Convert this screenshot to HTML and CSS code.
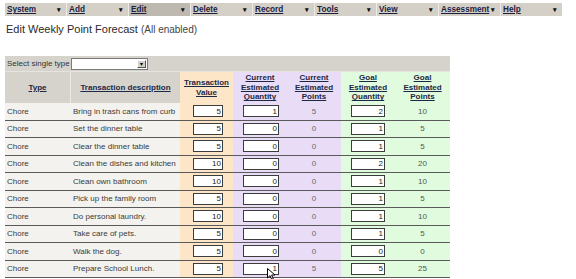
FILE: index.html
```html
<!DOCTYPE html>
<html lang="en">
<head>
    <meta charset="UTF-8">
    <title>Edit Weekly Point Forecast</title>
    <link rel="stylesheet" href="styles.css">
</head>
<body>

    <div class="menubar">
        <a class="menu-item" href="#"><span>System</span><i>&#9662;</i></a>
        <a class="menu-item" href="#"><span>Add</span><i>&#9662;</i></a>
        <a class="menu-item active" href="#"><span>Edit</span><i>&#9662;</i></a>
        <a class="menu-item" href="#"><span>Delete</span><i>&#9662;</i></a>
        <a class="menu-item" href="#"><span>Record</span><i>&#9662;</i></a>
        <a class="menu-item" href="#"><span>Tools</span><i>&#9662;</i></a>
        <a class="menu-item" href="#"><span>View</span><i>&#9662;</i></a>
        <a class="menu-item" href="#"><span>Assessment</span><i>&#9662;</i></a>
        <a class="menu-item" href="#"><span>Help</span><i>&#9662;</i></a>
    </div>

    <h1 class="title">Edit Weekly Point Forecast <small>(All enabled)</small></h1>

    <table class="forecast">
        <colgroup>
            <col style="width:66px">
            <col style="width:109px">
            <col style="width:53px">
            <col style="width:54px">
            <col style="width:54px">
            <col style="width:54px">
            <col style="width:55px">
        </colgroup>
        <tr class="filter-row">
            <td colspan="7">
                Select single type
                <span class="select-box"><select></select><span class="select-btn">&#9662;</span></span>
            </td>
        </tr>
        <tr class="head-row">
            <th class="sep"><a href="#">Type</a></th>
            <th><a href="#">Transaction description</a></th>
            <th class="c-val"><a href="#">Transaction Value</a></th>
            <th class="c-cur"><a href="#">Current Estimated Quantity</a></th>
            <th class="c-cur"><a href="#">Current Estimated Points</a></th>
            <th class="c-goal"><a href="#">Goal Estimated Quantity</a></th>
            <th class="c-goal"><a href="#">Goal Estimated Points</a></th>
        </tr>
        <tbody id="rows"></tbody>
    </table>

    <svg class="cursor" width="9" height="12" viewBox="0 0 9 12">
        <path d="M0.5 0.5 L0.5 10 L3 7.6 L4.8 11.5 L6.3 10.8 L4.6 7 L8 7 Z" fill="#fff" stroke="#000" stroke-width="1"/>
    </svg>

    <script>
        // Chores for this week: [description, value, current qty, goal qty]
        const chores = [
            ['Bring in trash cans from curb', 5, 1, 2],
            ['Set the dinner table', 5, 0, 1],
            ['Clear the dinner table', 5, 0, 1],
            ['Clean the dishes and kitchen', 10, 0, 2],
            ['Clean own bathroom', 10, 0, 1],
            ['Pick up the family room', 5, 0, 1],
            ['Do personal laundry.', 10, 0, 1],
            ['Take care of pets.', 5, 0, 1],
            ['Walk the dog.', 5, 0, 0],
            ['Prepare School Lunch.', 5, 1, 5]
        ];

        const tbody = document.getElementById('rows');

        chores.forEach(c => {
            const tr = document.createElement('tr');
            tr.className = 'data-row';
            tr.innerHTML =
                '<td class="txt">Chore</td>' +
                '<td class="txt">' + c[0] + '</td>' +
                '<td class="c-val"><input class="num w-val" value="' + c[1] + '"></td>' +
                '<td class="c-cur"><input class="num w-cur" value="' + c[2] + '"></td>' +
                '<td class="c-cur pts">' + (c[1] * c[2]) + '</td>' +
                '<td class="c-goal"><input class="num w-goal" value="' + c[3] + '"></td>' +
                '<td class="c-goal pts goal">' + (c[1] * c[3]) + '</td>';
            tbody.appendChild(tr);
        });
    </script>
</body>
</html>
```

FILE: styles.css
```css
* {
    box-sizing: border-box;
}

body {
    margin: 0;
    padding: 3px 5px 0;
    font-family: "Liberation Sans", Arial, sans-serif;
    color: #333;
    background: #fff;
}

.menubar {
    display: flex;
    gap: 1px;
    width: 557px;
    height: 13px;
    background: #ecebe8;
}

.menu-item {
    flex: 0 0 61px;
    display: flex;
    justify-content: space-between;
    align-items: center;
    padding: 0 5px 0 2px;
    background: #d4d0c8;
    color: #1d2140;
    font-size: 8.2px;
    font-weight: bold;
    text-decoration: none;
}

.menu-item span {
    text-decoration: underline;
}

.menu-item.active {
    background: #bdb9b1;
}

.menu-item i {
    font-style: normal;
    font-size: 7px;
    color: #111;
}

.title {
    margin: 6px 0 0 1px;
    font-size: 11px;
    line-height: 14px;
    font-weight: normal;
    color: #2a2a2a;
}

.title small {
    font-size: 10px;
    color: #444;
}

.forecast {
    margin-top: 19px;
    width: 445px;
    table-layout: fixed;
    border-collapse: separate;
    border-spacing: 0;
    font-size: 8px;
}

.filter-row td {
    height: 16px;
    padding: 0 2px;
    background: #d6d3cd;
    border-bottom: 1px solid #e6e4e0;
    color: #333;
    vertical-align: middle;
}

.select-box {
    display: inline-flex;
    vertical-align: middle;
    width: 77px;
    height: 12px;
    margin-left: -1px;
    border: 1px solid #7b7b7b;
    background: #fff;
}

.select-box select {
    flex: 1;
    border: none;
    appearance: none;
    background: #fff;
    height: 10px;
    padding: 0;
}

.select-btn {
    width: 9px;
    margin: 1px;
    background: #d4d0c8;
    border: 1px solid;
    border-color: #fff #555 #555 #fff;
    font-size: 6px;
    line-height: 6px;
    text-align: center;
    color: #000;
}

.head-row th {
    height: 31px;
    padding: 0 1px;
    background: #d6d3cd;
    font-size: 8px;
    line-height: 9.5px;
    font-weight: bold;
    text-align: center;
    vertical-align: middle;
}

.head-row th.sep {
    border-right: 1px solid #ebe9e5;
}

.head-row a {
    color: #1c2844;
}

.head-row th.c-val,
.data-row td.c-val {
    background: #fde5c8;
}

.head-row th.c-cur,
.data-row td.c-cur {
    background: #e8dcf7;
}

.head-row th.c-goal,
.data-row td.c-goal {
    background: #e1fbdf;
}

.data-row td {
    height: 17.5px;
    padding: 0 2px;
    background: #f4f2ee;
    border-bottom: 1px solid #5a5a5a;
    vertical-align: middle;
    color: #3a3a3a;
    white-space: nowrap;
}

.data-row td.pts {
    text-align: center;
    color: #6a6a6a;
}

.data-row td.goal {
    color: #4c5a4c;
}

.data-row td.c-val,
.data-row td.c-cur,
.data-row td.c-goal {
    text-align: center;
}

.num {
    height: 12px;
    padding: 0 1px;
    border: 1px solid #3c3c3c;
    background: #fff;
    font-family: "Liberation Sans", Arial, sans-serif;
    font-size: 8px;
    color: #222;
    text-align: right;
    vertical-align: middle;
}

.w-val {
    width: 30px;
    margin-left: 3px;
}

.w-cur {
    width: 36px;
    margin-left: 2px;
}

.w-goal {
    width: 34px;
}

.cursor {
    position: absolute;
    left: 267px;
    top: 268px;
}
```
